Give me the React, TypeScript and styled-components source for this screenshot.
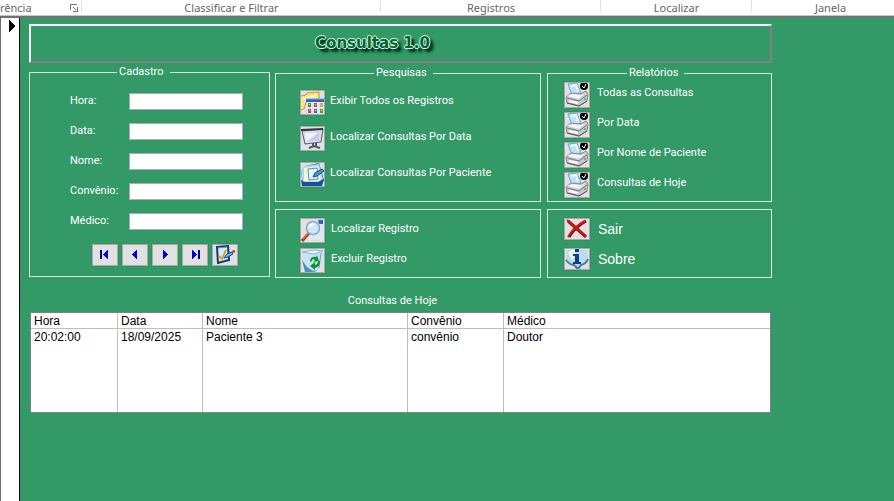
import React from "react";
import styled, { createGlobalStyle } from "styled-components";

const GREEN = "#339966";
const UI = 'Roboto, "Liberation Sans", sans-serif';
const SANS = '"Liberation Sans", Arial, sans-serif';

const GlobalStyle = createGlobalStyle`
  * { box-sizing: border-box; }
  body { margin: 0; background: ${GREEN}; font-family: ${UI}; font-size: 11px; }
`;

const Page = styled.div`
  min-height: 100vh;
  display: flex;
  flex-direction: column;
`;

const Ribbon = styled.header`
  display: grid;
  grid-template-columns: 82fr 299fr 220fr 151fr 142fr;
  background: #fff;
  border-bottom: 2px solid #6d7370;
  box-shadow: inset 0 -1px 0 #c6c6c6;
  font-family: "Noto Sans", sans-serif;
  font-size: 11px;
  line-height: 16px;
  color: #666;
`;

const RibbonGroup = styled.div<{ $edge?: "start" | "end" }>`
  display: flex;
  height: 16px;
  align-items: center;
  justify-content: ${(p) => (p.$edge === "start" ? "space-between" : "center")};
  padding-right: ${(p) => (p.$edge === "start" ? "4px" : "0")};
  padding-left: ${(p) => (p.$edge === "end" ? "15px" : "0")};
  background: ${(p) =>
    p.$edge === "end" ? "none" : "linear-gradient(#e1e1e1, #e1e1e1) right top / 1px 12px no-repeat"};
  white-space: nowrap;
`;

const Launcher = styled.button`
  display: flex;
  padding: 0;
  border: 0;
  background: none;
`;

const Workspace = styled.div`
  flex: 1;
  display: flex;
`;

const RecordSelector = styled.aside`
  width: 20px;
  padding: 2px 0 0 8px;
  background: #fff;
  border-left: 1px solid #6d6d6d;
  border-right: 1px solid #000;
`;

const Form = styled.main`
  flex: 1;
  min-width: 0;
  padding: 6px 122px 0 9px;
  background: ${GREEN};
`;

const TitleBar = styled.div`
  display: flex;
  justify-content: center;
  align-items: center;
  height: 39px;
  padding: 0 56px 2px 0;
  border: 2px solid #fff;
  border-right-color: #857f82;
  border-bottom-color: #857f82;
`;

const Title = styled.h1`
  margin: 0;
  font: 700 15px/20px "DejaVu Sans", sans-serif;
  color: #006633;
  text-shadow: 1px 0 #d8f5e5, -1px 0 #d8f5e5, 0 1px #d8f5e5, 0 -1px #d8f5e5,
    3px 3px 2px #06351d, 4px 4px 3px #06351d;
`;

const Panels = styled.div`
  display: grid;
  grid-template-columns: 241fr 497fr;
  gap: 5px;
  align-items: start;
  margin-top: 2px;
`;

const ActionPanels = styled.div`
  display: grid;
  grid-template-columns: 266fr 225fr;
  gap: 7px 6px;
  margin-top: 1px;
`;

const Group = styled.fieldset<{ $indent: number }>`
  margin: 0;
  min-width: 0;
  padding: 0 0 0 ${(p) => p.$indent}px;
  border: 1px solid #d3eedf;
  color: #fff;
`;

const Legend = styled.legend<{ $start: number }>`
  margin-left: ${(p) => p.$start}px;
  padding: 0 6px 0 2px;
  line-height: 14px;
`;

const Box = styled.section<{ $indent: number }>`
  padding: 8px 0 4px ${(p) => p.$indent}px;
  border: 1px solid #d3eedf;
  color: #fff;
`;

const Fields = styled.div`
  display: flex;
  flex-direction: column;
  gap: 13px;
  padding-top: 14px;
`;

const Field = styled.div`
  display: flex;
  height: 17px;
`;

const FieldLabel = styled.label`
  width: 59px;
  line-height: 16px;
`;

const TextBox = styled.input`
  width: 114px;
  min-width: 0;
  height: 17px;
  padding: 0 2px;
  border: 1px solid #a9b0ac;
  border-radius: 0;
  background: #fff;
  font: 12px ${SANS};
`;

const NavBar = styled.div`
  display: flex;
  gap: 4px;
  padding: 14px 0 10px 22px;
`;

const ToolButton = styled.button<{ $w?: number; $h?: number }>`
  display: flex;
  flex: none;
  align-items: center;
  justify-content: center;
  width: ${(p) => p.$w ?? 26}px;
  height: ${(p) => p.$h ?? 22}px;
  padding: 0;
  border: 1px solid #a9a9a9;
  background: #e1e1e1;
  box-shadow: 0 0 1px #1e7048;
`;

const Actions = styled.div<{ $gap: number; $top?: number; $bottom?: number }>`
  display: flex;
  flex-direction: column;
  gap: ${(p) => p.$gap}px;
  padding-top: ${(p) => p.$top ?? 0}px;
  padding-bottom: ${(p) => p.$bottom ?? 0}px;
`;

const ActionRow = styled.div<{ $gap: number }>`
  display: flex;
  align-items: center;
  gap: ${(p) => p.$gap}px;
`;

const ActionLabel = styled.label<{ $large?: boolean }>`
  padding-bottom: ${(p) => (p.$large ? 0 : 4)}px;
  font-family: ${(p) => (p.$large ? SANS : UI)};
  font-size: ${(p) => (p.$large ? 14 : 11)}px;
  line-height: 14px;
  white-space: nowrap;
`;

const ListTitle = styled.h2`
  margin: 16px 0 4px;
  padding-right: 16px;
  font-weight: 400;
  font-size: 11px;
  line-height: 14px;
  text-align: center;
  color: #fff;
`;

const ListFrame = styled.div`
  margin: 0 1px;
  border: 1px solid #808080;
  border-bottom-color: #7d8a83;
  background: #fff;
`;

const List = styled.table`
  width: 100%;
  table-layout: fixed;
  border-spacing: 0;
  font: 12px/14px ${SANS};
  color: #000;
  th, td {
    padding: 1px 0 0 3px;
    border-right: 1px solid #bdbdbd;
    font-weight: 400;
    text-align: left;
    vertical-align: top;
  }
  th { height: 16px; border-bottom: 1px solid #bdbdbd; }
  td { height: 83px; }
  th:last-child, td:last-child { border-right: 0; }
`;

/* ---------- icons ---------- */

const LauncherIcon = () => (
  <svg width="8" height="8" viewBox="0 0 8 8" fill="none" stroke="#777" shapeRendering="crispEdges">
    <path d="M0.5 6V0.5H7M3 3l3 3M7.5 3v4.5H3" />
  </svg>
);

const CurrentRecord = () => (
  <svg width="6" height="12" viewBox="0 0 6 12" shapeRendering="crispEdges">
    <path d="M0 0L6 6L0 12Z" fill="#000" />
  </svg>
);

const NavIcon = ({ back, edge }: { back?: boolean; edge?: boolean }) => (
  <svg width="10" height="10" viewBox="0 0 10 10" shapeRendering="crispEdges">
    <g transform={back ? undefined : "matrix(-1 0 0 1 10 0)"}>
      {edge && <path d="M0 0h2v9H0z" fill="#000080" />}
      <path d={edge ? "M8 -1v11L3 4.500z" : "M7 -1v11L2 4.500z"} fill="#0000e6" />
    </g>
  </svg>
);

const EditIcon = () => (
  <svg width="22" height="20" viewBox="0 0 22 20">
    <path d="M3 2L14 1L15 15L4 18Z" fill="#d6ecfb" stroke="#123a78" strokeWidth="2" />
    <path d="M4 3l9-1" stroke="#4e9cda" />
    <path d="M5 11l3 3 4-9" fill="none" stroke="#e0a02c" strokeWidth="2" />
    <path d="M10 13l3-4 5-2 1 2-5 3z" fill="#6eb2e8" stroke="#174a88" />
    <path d="M18 7l3-1" stroke="#c43422" strokeWidth="2" />
  </svg>
);

const FolderIcon = () => (
  <svg width="23" height="23" viewBox="0 0 23 23">
    <path d="M0 5l5-1 1-2 12-1 1 7-2 3H5l-3 8H0z" fill="#f7e58c" />
    <path d="M0 5l5-1 1-2 12-1v7M0 19l3-1 2-7" fill="none" stroke="#c59b35" />
    <path d="M2 7l14-2" stroke="#fff7bd" strokeWidth="2" />
    <path d="M6 9h17v13H6z" fill="#e4e5e6" />
    <path d="M5 8h18v3H5z" fill="#2463c7" />
    <path d="M5 8h18" stroke="#69a3ef" />
    <path d="M7 12h3v4H7z" fill="#3d9255" /><path d="M13 12h3v4h-3z" fill="#d64b3b" />
    <path d="M19 12h3v4h-3z" fill="#e4a52b" /><path d="M7 18h3v4H7z" fill="#cc3c53" />
    <path d="M13 18h3v4h-3z" fill="#346ccd" /><path d="M19 18h3v4h-3z" fill="#4b9f3d" />
    <path d="M8 13h1v1H8zM14 13h1v1h-1zM20 13h1v1h-1zM8 19h1v1H8zM14 19h1v1h-1zM20 19h1v1h-1z" fill="#f4e9b5" />
  </svg>
);

const MonitorIcon = () => (
  <svg width="23" height="23" viewBox="0 0 23 23">
    <path d="M1 4l21-2-2 13-16 2z" fill="#d9dcf0" stroke="#5b5e6d" />
    <path d="M0 3l22-1" stroke="#303444" strokeWidth="2" />
    <path d="M4 6h14L5 14z" fill="#f2f3fa" />
    <path d="M18 5v9H8z" fill="#c8cbea" />
    <path d="M12 16v4M15 16v4M8 21l5-2 6 2" fill="none" stroke="#555966" strokeWidth="2" />
  </svg>
);

const NoteIcon = () => (
  <svg width="23" height="23" viewBox="0 0 23 23">
    <path d="M4 3l14-3 5 17-3 6H2L0 8z" fill="#296eb7" />
    <path d="M0 8l4-5 14-2 4 15-4 4H2z" fill="#a9daf4" />
    <path d="M3 5l14-2 3 13-3 2H3z" fill="#f7f4cb" />
    <path d="M7 6l9-1 1 11-9 1z" fill="#e6f7ff" stroke="#3b91cf" />
    <path d="M12 14l2-4 7-4 2 2-7 5z" fill="#4c98cb" stroke="#174b7d" />
    <path d="M0 17l3 2h14l6-3-2 7H1z" fill="#174f9b" />
  </svg>
);

const SearchIcon = () => (
  <svg width="23" height="23" viewBox="0 0 23 23">
    <path d="M4 3l17-2 2 19-15 2z" fill="#d6eafa" />
    <path d="M17 1h5v4h-4z" fill="#2666bd" />
    <path d="M1 22l7-8" stroke="#a7431c" strokeWidth="3" />
    <path d="M2 20l5-6" stroke="#ef9648" />
    <circle cx="12" cy="9" r="6.500" fill="#c7e9fa" stroke="#9aa0c4" strokeWidth="1.500" />
    <path d="M8 9q1-4 5-4" fill="none" stroke="#fff" strokeWidth="2" />
  </svg>
);

const RecycleIcon = () => (
  <svg width="23" height="23" viewBox="0 0 23 23">
    <path d="M1 3l13-2 9 1-4 19-11 2-5-4z" fill="#c8e3f4" />
    <path d="M1 3l12 2 9-3-9-1z" fill="#edf9ff" stroke="#8eb5d0" />
    <path d="M1 11l5 7 6 4 5-1-4 2H4z" fill="#4d8fc4" />
    <path d="M20 4l-2 15" stroke="#799cb9" />
    <path d="M9 12q1-5 6-4l1-2 2 6-6 1 2-2-2-1-2 3zM19 12q0 6-5 7v2l-5-4 5-4v3q3-1 3-4z" fill="#129033" />
  </svg>
);

const PrinterIcon = () => (
  <svg width="24" height="24" viewBox="0 0 24 24">
    <path d="M3 1l9-1 4 10-9 2z" fill="#b9e4fa" stroke="#78a3c4" />
    <path d="M6 3l5-1 2 6" fill="none" stroke="#edfaff" strokeWidth="2" />
    <path d="M1 14l5-4 10 1 5-3 2 3-1 7-8 5L2 20z" fill="#c7c8cc" stroke="#8a8b91" />
    <path d="M2 13l5-2 9 1 5-2-7 6z" fill="#f5f5f5" />
    <path d="M2 15l12 3 8-6" fill="none" stroke="#777980" />
    <path d="M2 20l12 3 8-5" fill="none" stroke="#55575d" />
    <path d="M4 18l9 2" stroke="#fff" strokeWidth="2" />
    <path d="M19 15h2v2h-2z" fill="#70b76c" />
    <circle cx="19" cy="3" r="4" fill="#000" />
    <path d="M17 3l2 2 2-4" fill="none" stroke="#fff" />
  </svg>
);

const CloseIcon = () => (
  <svg width="24" height="20" viewBox="0 0 24 20">
    <path d="M4 18Q10 8 21 2M3 2Q10 8 21 18" fill="none" stroke="#681d19" strokeWidth="3" />
    <path d="M3 18Q10 7 20 2M2 1Q10 8 21 17" fill="none" stroke="#db1010" strokeWidth="2" />
  </svg>
);

const InfoIcon = () => (
  <svg width="24" height="20" viewBox="0 0 24 20">
    <path d="M2 1h20l1 11-6 4-4 4-4-4-8-4z" fill="#b9dce9" />
    <path d="M1 11q4 5 8 5l4 4 3-4q5-1 7-6" fill="none" stroke="#47799d" strokeWidth="2" />
    <path d="M3 4q3-4 8-3L8 12z" fill="#e8f8fb" />
    <path d="M10 0h4v3h-4zM8 5h6v8h2v2H8v-2h2V7H8z" fill="#123b8d" />
  </svg>
);

/* ---------- data ---------- */

type Action = { id: string; text: string; icon: React.ReactNode };

const SEARCHES: Action[] = [
  { id: "todos", text: "Exibir Todos os Registros", icon: <FolderIcon /> },
  { id: "busca-data", text: "Localizar Consultas Por Data", icon: <MonitorIcon /> },
  { id: "busca-paciente", text: "Localizar Consultas Por Paciente", icon: <NoteIcon /> },
];
const REPORTS: Action[] = [
  "Todas as Consultas",
  "Por Data",
  "Por Nome de Paciente",
  "Consultas de Hoje",
].map((text, i) => ({ id: `relatorio-${i}`, text, icon: <PrinterIcon /> }));
const RECORDS: Action[] = [
  { id: "localizar", text: "Localizar Registro", icon: <SearchIcon /> },
  { id: "excluir", text: "Excluir Registro", icon: <RecycleIcon /> },
];
const SYSTEM: Action[] = [
  { id: "sair", text: "Sair", icon: <CloseIcon /> },
  { id: "sobre", text: "Sobre", icon: <InfoIcon /> },
];
const FIELDS = ["Hora", "Data", "Nome", "Convênio", "Médico"];
const COLUMNS = [
  { name: "Hora", width: "87px", value: "20:02:00" },
  { name: "Data", width: "85px", value: "18/09/2025" },
  { name: "Nome", width: "205px", value: "Paciente 3" },
  { name: "Convênio", width: "96px", value: "convênio" },
  { name: "Médico", width: "auto", value: "Doutor" },
];

type ListProps = {
  items: Action[];
  w: number;
  h: number;
  rowGap: number;
  labelGap: number;
  top?: number;
  bottom?: number;
  large?: boolean;
};

const ActionList = ({ items, w, h, rowGap, labelGap, top, bottom, large }: ListProps) => (
  <Actions $gap={rowGap} $top={top} $bottom={bottom}>
    {items.map((a) => (
      <ActionRow key={a.id} $gap={labelGap}>
        <ToolButton id={a.id} type="button" $w={w} $h={h}>{a.icon}</ToolButton>
        <ActionLabel htmlFor={a.id} $large={large}>{a.text}</ActionLabel>
      </ActionRow>
    ))}
  </Actions>
);

export default function App() {
  return (
    <Page>
      <GlobalStyle />
      <Ribbon>
        <RibbonGroup $edge="start">
          rência
          <Launcher type="button" aria-label="Opções"><LauncherIcon /></Launcher>
        </RibbonGroup>
        <RibbonGroup>Classificar e Filtrar</RibbonGroup>
        <RibbonGroup>Registros</RibbonGroup>
        <RibbonGroup>Localizar</RibbonGroup>
        <RibbonGroup $edge="end">Janela</RibbonGroup>
      </Ribbon>
      <Workspace>
        <RecordSelector><CurrentRecord /></RecordSelector>
        <Form>
          <TitleBar><Title>Consultas 1.0</Title></TitleBar>
          <Panels>
            <Group $indent={40}>
              <Legend $start={47}>Cadastro</Legend>
              <Fields>
                {FIELDS.map((name) => (
                  <Field key={name}>
                    <FieldLabel htmlFor={name}>{name}:</FieldLabel>
                    <TextBox id={name} type="text" />
                  </Field>
                ))}
              </Fields>
              <NavBar>
                <ToolButton type="button" aria-label="Primeiro"><NavIcon back edge /></ToolButton>
                <ToolButton type="button" aria-label="Anterior"><NavIcon back /></ToolButton>
                <ToolButton type="button" aria-label="Próximo"><NavIcon /></ToolButton>
                <ToolButton type="button" aria-label="Último"><NavIcon edge /></ToolButton>
                <ToolButton type="button" aria-label="Editar"><EditIcon /></ToolButton>
              </NavBar>
            </Group>
            <ActionPanels>
              <Group $indent={24}>
                <Legend $start={74}>Pesquisas</Legend>
                <ActionList items={SEARCHES} w={25} h={25} rowGap={11} labelGap={5} top={10} bottom={14} />
              </Group>
              <Group $indent={16}>
                <Legend $start={63}>Relatórios</Legend>
                <ActionList items={REPORTS} w={26} h={26} rowGap={4} labelGap={7} top={2} bottom={3} />
              </Group>
              <Box $indent={24}>
                <ActionList items={RECORDS} w={25} h={25} rowGap={5} labelGap={6} />
              </Box>
              <Box $indent={16}>
                <ActionList items={SYSTEM} w={26} h={22} rowGap={8} labelGap={8} large />
              </Box>
            </ActionPanels>
          </Panels>
          <ListTitle>Consultas de Hoje</ListTitle>
          <ListFrame>
            <List>
              <colgroup>
                {COLUMNS.map((c) => <col key={c.name} width={c.width} />)}
              </colgroup>
              <thead>
                <tr>{COLUMNS.map((c) => <th key={c.name} scope="col">{c.name}</th>)}</tr>
              </thead>
              <tbody>
                <tr>{COLUMNS.map((c) => <td key={c.name}>{c.value}</td>)}</tr>
              </tbody>
            </List>
          </ListFrame>
        </Form>
      </Workspace>
    </Page>
  );
}
